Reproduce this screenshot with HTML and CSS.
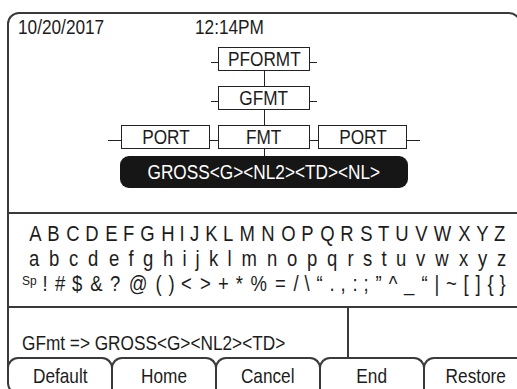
FILE: index.html
```html
<!DOCTYPE html>
<html lang="en">

<head>
    <meta charset="UTF-8">
    <meta name="viewport" content="width=device-width, initial-scale=1.0">
    <title>Format Editor</title>
    <link rel="stylesheet" href="styles.css">
</head>

<body>
    <div class="screen">
        <div class="display">
            <div class="clock">
                <span class="date"><span class="narrow">10/20/2017</span></span>
                <span class="time"><span class="narrow">12:14PM</span></span>
            </div>
            <div class="tree">
                <div class="level">
                    <span class="stub"></span><span class="box"><span class="narrow">PFORMT</span></span><span class="stub"></span>
                </div>
                <span class="link"></span>
                <div class="level">
                    <span class="stub"></span><span class="box"><span class="narrow">GFMT</span></span><span class="stub"></span>
                </div>
                <span class="link"></span>
                <div class="level">
                    <span class="stub stub-long"></span><span class="box box-port"><span class="narrow">PORT</span></span><span class="stub stub-joint"></span><span class="box"><span class="narrow">FMT</span></span><span class="stub stub-joint"></span><span class="box box-port"><span class="narrow">PORT</span></span><span class="stub stub-long"></span>
                </div>
                <span class="link link-short"></span>
                <div class="value"><span class="narrow">GROSS&lt;G&gt;&lt;NL2&gt;&lt;TD&gt;&lt;NL&gt;</span></div>
            </div>
        </div>
        <div class="keyboard">
            <div class="keys">
                <span>A</span><span>B</span><span>C</span><span>D</span><span>E</span><span>F</span><span>G</span><span>H</span><span>I</span><span>J</span><span>K</span><span>L</span><span>M</span><span>N</span><span>O</span><span>P</span><span>Q</span><span>R</span><span>S</span><span>T</span><span>U</span><span>V</span><span>W</span><span>X</span><span>Y</span><span>Z</span>
            </div>
            <div class="keys">
                <span>a</span><span>b</span><span>c</span><span>d</span><span>e</span><span>f</span><span>g</span><span>h</span><span>i</span><span>j</span><span>k</span><span>l</span><span>m</span><span>n</span><span>o</span><span>p</span><span>q</span><span>r</span><span>s</span><span>t</span><span>u</span><span>v</span><span>w</span><span>x</span><span>y</span><span>z</span>
            </div>
            <div class="keys keys-symbols">
                <span class="key-sp">Sp</span><span>!</span><span>#</span><span>$</span><span>&amp;</span><span>?</span><span>@</span><span>(</span><span>)</span><span>&lt;</span><span>&gt;</span><span>+</span><span>*</span><span>%</span><span>=</span><span>/</span><span>\</span><span>“</span><span>.</span><span>,</span><span>:</span><span>;</span><span>”</span><span>^</span><span>_</span><span>“</span><span>|</span><span>~</span><span>[</span><span>]</span><span>{</span><span>}</span>
            </div>
        </div>
        <div class="status">
            <div class="message"><span class="narrow narrow-left">GFmt =&gt; GROSS&lt;G&gt;&lt;NL2&gt;&lt;TD&gt;</span></div>
            <div class="aside"></div>
        </div>
        <div class="softkeys">
            <div class="softkey"><span class="narrow">Default</span></div>
            <div class="softkey"><span class="narrow">Home</span></div>
            <div class="softkey"><span class="narrow">Cancel</span></div>
            <div class="softkey"><span class="narrow">End</span></div>
            <div class="softkey"><span class="narrow">Restore</span></div>
        </div>
    </div>
</body>

</html>
```

FILE: styles.css
```css
* {
    box-sizing: border-box;
}

body {
    margin: 0;
    padding: 12px 0 0 7px;
    width: 517px;
    height: 389px;
    overflow: hidden;
    background: #fff;
    color: #1c1c1c;
    font-family: "Liberation Sans", Arial, sans-serif;
    font-size: 21px;
    line-height: 21px;
}

/* the display font is a narrow grotesque, squeeze the regular one */
.narrow {
    display: inline-block;
    white-space: nowrap;
    transform: scaleX(0.82);
}

.narrow-left,
.clock .narrow {
    transform-origin: left center;
}

.screen {
    width: 514px;
    height: 383px;
    border: 2px solid #3a3a3a;
    border-radius: 12px 12px 0 12px;
    overflow: hidden;
    display: flex;
    flex-direction: column;
}

/* top part: clock and format tree */
.display {
    height: 200px;
    flex: none;
    border-bottom: 2px solid #3a3a3a;
}

.clock {
    display: flex;
    padding: 2px 0 0 9px;
}

.date {
    width: 177px;
}

.tree {
    margin-top: 10px;
    display: flex;
    flex-direction: column;
    align-items: center;
}

.level {
    display: flex;
}

.box {
    width: 92px;
    height: 24px;
    border: 1px solid #222;
    text-align: center;
    line-height: 22px;
}

.box-port {
    width: 89px;
}

.stub {
    width: 7px;
    height: 1px;
    margin-top: 15px;
    background: #222;
}

.stub-long {
    width: 13px;
}

.stub-joint {
    width: 8px;
}

.link {
    width: 1px;
    height: 15px;
    background: #222;
}

.link-short {
    height: 7px;
}

.value {
    width: 288px;
    height: 32px;
    border-radius: 9px;
    background: #161616;
    color: #fff;
    text-align: center;
    line-height: 32px;
}

/* character keyboard */
.keyboard {
    flex: none;
    padding: 7px 12px 10px 19px;
    border-bottom: 2px solid #3a3a3a;
    font-size: 22px;
}

.keys {
    display: flex;
    justify-content: space-between;
    line-height: 25px;
}

.keys span {
    transform: scaleX(0.84);
}

.keys-symbols {
    margin-left: -6px;
}

.keys .key-sp {
    font-size: 12px;
    line-height: 12px;
    align-self: flex-start;
    margin-top: 4px;
    transform: none;
}

/* message line */
.status {
    flex: none;
    height: 49px;
    display: flex;
}

.message {
    width: 338px;
    align-self: flex-end;
    padding: 0 0 4px 13px;
}

.aside {
    flex: 1;
    border-left: 2px solid #3a3a3a;
}

/* soft keys */
.softkeys {
    flex: 1;
    display: flex;
    margin-left: -2px;
}

.softkey {
    flex: none;
    width: 106px;
    border: 2px solid #3a3a3a;
    border-bottom: none;
    border-radius: 11px 11px 0 0;
    text-align: center;
    padding-top: 6px;
}

.softkey + .softkey {
    margin-left: -2px;
}
```
